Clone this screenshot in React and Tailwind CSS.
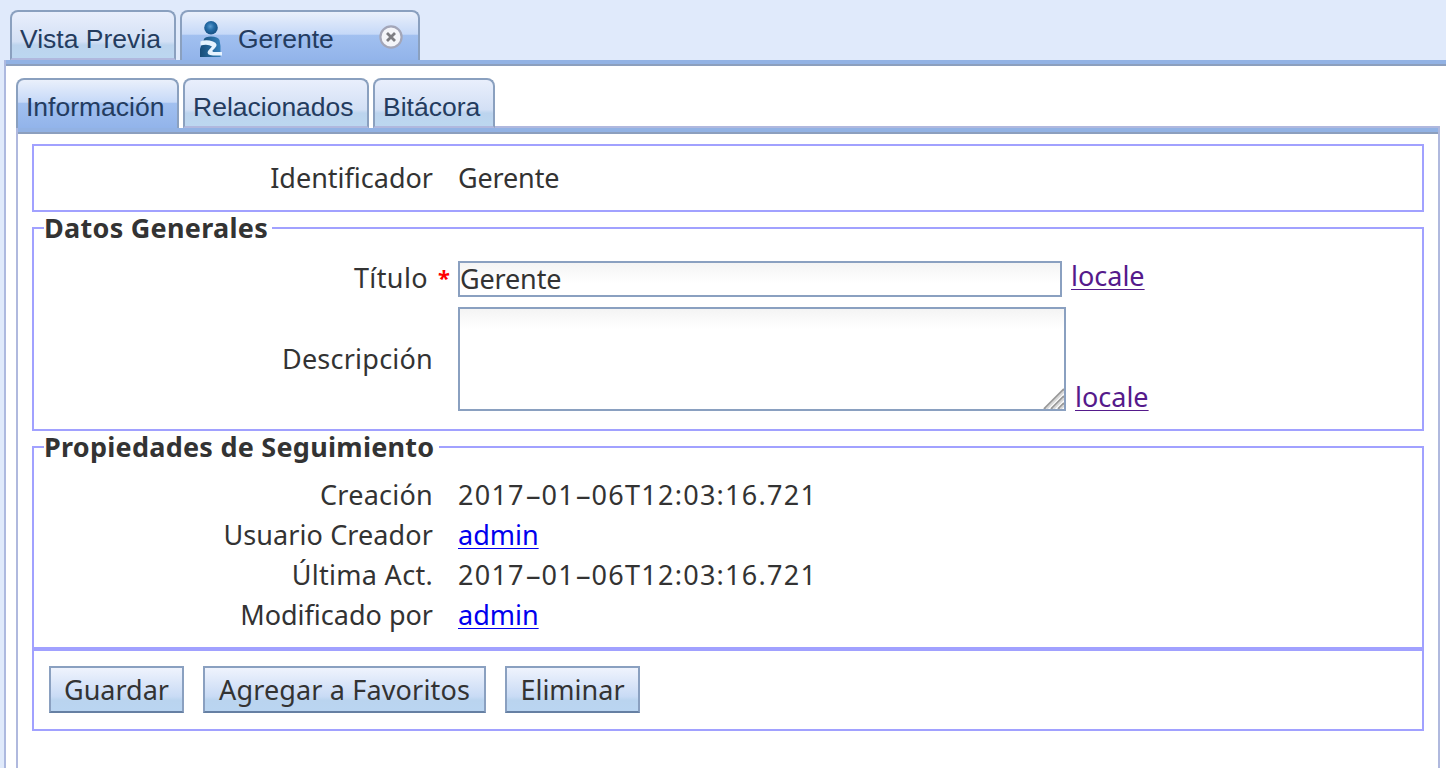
const band = "h-1.5 border-b-2 border-[#8c9fbe] bg-[#92b2e4]";
const label = "shrink-0 text-right";
const link = "underline decoration-1 underline-offset-[3px]";

function Tab({ active, className, children }) {
  return (
    <div
      className={`flex shrink-0 rounded-t-[8px] border-2 border-[#8aa0bf] font-['Liberation_Sans',sans-serif] text-[26.5px] leading-[30px] text-[#243c5f] ${
        active
          ? "border-b-0 bg-[linear-gradient(#eaf0fb_0%,#c6d9f8_46%,#a1c0f0_49%,#92b4ea_100%)]"
          : "border-b-[#b0b8de] bg-[linear-gradient(#e9effc_0%,#d3e0f5_64%,#bcd4ee_72%,#bcd7f0_100%)]"
      } ${className}`}
    >
      {children}
    </div>
  );
}

function PersonIcon() {
  return (
    <svg className="h-9 w-6 shrink-0" viewBox="0 0 24 36">
      <defs>
        <radialGradient id="head" cx="45%" cy="40%">
          <stop offset="0" stopColor="#5a9bd0" />
          <stop offset="0.55" stopColor="#256da8" />
          <stop offset="1" stopColor="#1a578c" />
        </radialGradient>
        <linearGradient id="torso" x1="0" x2="1">
          <stop offset="0" stopColor="#174c78" />
          <stop offset="1" stopColor="#3480bb" />
        </linearGradient>
      </defs>
      <circle cx="12" cy="6.8" r="6.8" fill="url(#head)" />
      <path d="M5 18Q6 15.500 12 15.500Q19 15.500 20.500 19L21.500 25V36H1V28Q2 24 4 21Z" fill="url(#torso)" />
      <path d="M1.500 20.500Q7 18 14 20.500Q20 23 16 27L13.500 29.500Q13 31 16 31H23V34.500H14Q7 34 9 30L13 25.500Q9 22.500 1.500 24.500Z" fill="#e6f3ff" />
    </svg>
  );
}

function CloseIcon() {
  return (
    <svg className="size-6 shrink-0" viewBox="0 0 24 24">
      <circle cx="12" cy="12" r="10.6" fill="#f4f5f9" stroke="#a3a6b8" strokeWidth="2.2" />
      <path d="M8 8L16 16M16 8L8 16" stroke="#7d7d82" strokeWidth="2.8" />
    </svg>
  );
}

function Button({ className, children }) {
  return (
    <button
      className={`h-[47px] shrink-0 whitespace-nowrap border-2 border-[#8aa0c0] border-b-[#6680a3] bg-[linear-gradient(#eff3fd_0%,#c9dbf5_66%,#bad4ef_75%,#bad5f1_100%)] text-center leading-[44px] ${className}`}
    >
      {children}
    </button>
  );
}

function Row({ name, nameClass = "", children }) {
  return (
    <div className="flex h-10 leading-10">
      <div className={`w-[399px] ${label} ${nameClass}`}>{name}</div>
      <div className="ml-[25px]">{children}</div>
    </div>
  );
}

function Timestamp({ value }) {
  return (
    <span className="tracking-[1.25px]">
      {value.split("").map((c, i) =>
        c === "-" ? (
          <span key={i} className="inline-block w-[16.7px] scale-x-[1.9] text-center tracking-normal">-</span>
        ) : (
          c
        )
      )}
    </span>
  );
}

function Legend({ className, children }) {
  return (
    <h2 className={`-mt-[11px] ml-[10px] h-5 whitespace-nowrap bg-white font-bold leading-5 ${className}`}>
      {children}
    </h2>
  );
}

export default function App() {
  return (
    <div className="h-[768px] w-[1446px] overflow-hidden bg-[#e0eafb] pt-[10px] font-['Noto_Sans',sans-serif] text-[27px] text-[#333]">
      <div className="flex h-[50px] gap-1 pl-[10px]">
        <Tab className="w-[166px] pl-2 pt-3">Vista Previa</Tab>
        <Tab active className="w-[240px] pl-[17px]">
          <div className="pt-[9px]"><PersonIcon /></div>
          <div className="ml-[15px] pt-3">Gerente</div>
          <div className="ml-auto mr-[15px] pt-[13px]"><CloseIcon /></div>
        </Tab>
      </div>
      <div className="ml-1 h-[708px] border-l-2 border-[#adb9df] bg-white">
        <div className={band} />
        <div className="flex h-[62px] gap-1 pl-[10px] pt-3">
          <Tab active className="w-[163px] pl-2 pt-3">Información</Tab>
          <Tab className="w-[186px] pl-2 pt-3">Relacionados</Tab>
          <Tab className="w-[122px] pl-2 pt-3">Bitácora</Tab>
          <div className="h-[50px] flex-1 border-b-2 border-[#b0b8de] -ml-1 mr-[6px]" />
        </div>
        <div className="ml-[10px] h-[640px] w-[1424px] border-x-2 border-[#b0b9de]">
          <div className={band} />
          <div className="px-[14px] pt-[10px]">
            <section className="h-[68px] border-2 border-[#a1a1ff] pt-3">
              <Row name="Identificador"><span className="tracking-[-0.15px]">Gerente</span></Row>
            </section>
            <section className="mt-[15px] h-[204px] border-2 border-[#a1a1ff]">
              <Legend className="w-[228px] tracking-[0.28px]">Datos Generales</Legend>
              <div className="mt-[23px] flex h-9">
                <div className={`w-[394px] ${label} leading-[34px] tracking-[0.4px]`}>Título</div>
                <b className="ml-[10px] w-3 text-[22px] leading-[32px] text-[#f00]">*</b>
                <div className="ml-2 w-[604px] border-2 border-[#8aa0c0] bg-[linear-gradient(#f4f4f4,#fff_20px)] leading-8 tracking-[-0.15px]">Gerente</div>
                <a className={`ml-[9px] leading-[30px] text-[#551a8b] ${link}`}>locale</a>
              </div>
              <div className="mt-[10px] flex h-[104px]">
                <div className={`w-[399px] ${label} leading-[104px] tracking-[0.23px]`}>Descripción</div>
                <div className="ml-[25px] flex w-[608px] items-end justify-end border-2 border-[#8aa0c0] bg-[linear-gradient(#f4f4f4,#fff_20px)]">
                  <svg className="size-[21px]" viewBox="0 0 21 21" strokeWidth="2">
                    <path d="M1 21L21 1M8 21L21 8M15 21L21 15" stroke="#999" />
                    <path d="M3.500 21L21 3.500M10.500 21L21 10.500M17.500 21L21 17.500" stroke="#d8d8d8" />
                  </svg>
                </div>
                <a className={`ml-[9px] mt-[72px] leading-9 text-[#551a8b] ${link}`}>locale</a>
              </div>
            </section>
            <section className="mt-[15px] h-[203px] border-2 border-[#a1a1ff]">
              <Legend className="w-[395px] tracking-[0.25px]">Propiedades de Seguimiento</Legend>
              <div className="mt-[18px]">
                <Row name="Creación" nameClass="tracking-[0.25px]"><Timestamp value="2017-01-06T12:03:16.721" /></Row>
                <Row name="Usuario Creador" nameClass="tracking-[0.1px]"><a className={`text-[#00e] ${link}`}>admin</a></Row>
                <Row name="Última Act." nameClass="tracking-[0.3px]"><Timestamp value="2017-01-06T12:03:16.721" /></Row>
                <Row name="Modificado por"><a className={`text-[#00e] ${link}`}>admin</a></Row>
              </div>
            </section>
            <section className="flex h-[82px] border-2 border-[#a1a1ff] pl-[15px] pt-[15px]">
              <Button className="w-[135px]">Guardar</Button>
              <Button className="ml-[19px] w-[283px] tracking-[0.15px]">Agregar a Favoritos</Button>
              <Button className="ml-[19px] w-[135px]">Eliminar</Button>
            </section>
          </div>
        </div>
      </div>
    </div>
  );
}
